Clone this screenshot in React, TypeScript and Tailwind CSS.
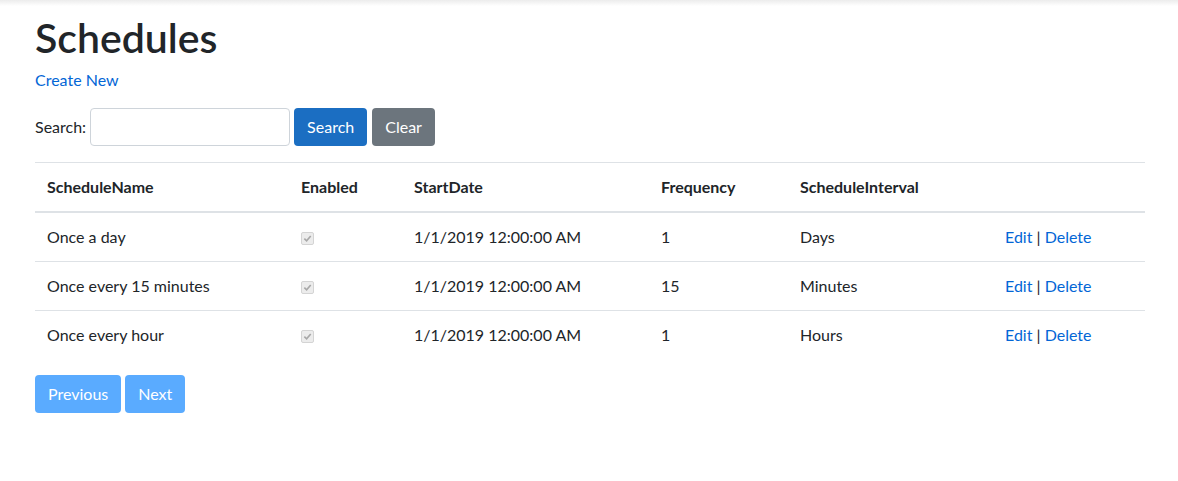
import React from 'react';

interface Schedule {
  name: string;
  enabled: boolean;
  startDate: string;
  frequency: number;
  interval: string;
}

const schedules: Schedule[] = [
  { name: 'Once a day', enabled: true, startDate: '1/1/2019 12:00:00 AM', frequency: 1, interval: 'Days' },
  { name: 'Once every 15 minutes', enabled: true, startDate: '1/1/2019 12:00:00 AM', frequency: 15, interval: 'Minutes' },
  { name: 'Once every hour', enabled: true, startDate: '1/1/2019 12:00:00 AM', frequency: 1, interval: 'Hours' },
];

function CheckBox() {
  return (
    <span className="inline-flex h-[13px] w-[13px] items-center justify-center rounded-[2px] border border-[#d4d4d4] bg-[#ececec] align-middle">
      <svg viewBox="0 0 10 10" className="h-[9px] w-[9px]">
        <path d="M1.5 5.2 L4 7.6 L8.6 2.2" fill="none" stroke="#a8a8a8" strokeWidth="1.8" />
      </svg>
    </span>
  );
}

export default function App() {
  return (
    <div className="min-h-[481px] bg-white text-[16px] leading-6 text-[#212529]" style={{ fontFamily: 'Lato, "Open Sans", sans-serif' }}>
      <div className="h-[6px] bg-gradient-to-b from-[#ececec] to-white" />
      <div className="pl-[35px] pr-[33px]">
        <h1 className="mt-[8px] text-[41px] font-semibold leading-[48px]">Schedules</h1>
        <a href="#" className="mt-[6px] block text-[#0366d6]">Create New</a>
        <form className="mt-[16px] flex items-center" onSubmit={(e) => e.preventDefault()}>
          <label className="mr-[4px]">Search:</label>
          <input className="h-[38px] w-[200px] rounded border border-[#ced4da] px-3" />
          <button className="ml-[4px] h-[38px] rounded bg-[#1b6ec2] px-[13px] text-white">Search</button>
          <button className="ml-[5px] h-[38px] rounded bg-[#6c757d] px-[13px] text-white">Clear</button>
        </form>
        <table className="mt-[16px] w-full table-fixed border-collapse text-left">
          <colgroup>
            <col className="w-[254px]" />
            <col className="w-[113px]" />
            <col className="w-[247px]" />
            <col className="w-[139px]" />
            <col className="w-[205px]" />
            <col />
          </colgroup>
          <thead>
            <tr className="border-t border-b-2 border-t-[#dee2e6] border-b-[#dee2e6]">
              <th className="px-3 py-3 font-bold">ScheduleName</th>
              <th className="px-3 py-3 font-bold">Enabled</th>
              <th className="px-3 py-3 font-bold">StartDate</th>
              <th className="px-3 py-3 font-bold">Frequency</th>
              <th className="px-3 py-3 font-bold">ScheduleInterval</th>
              <th className="px-3 py-3" />
            </tr>
          </thead>
          <tbody>
            {schedules.map((s, i) => (
              <tr key={s.name} className={i > 0 ? 'border-t border-[#dee2e6]' : ''}>
                <td className="px-3 py-3">{s.name}</td>
                <td className="px-3 py-3"><CheckBox /></td>
                <td className="px-3 py-3">{s.startDate}</td>
                <td className="px-3 py-3">{s.frequency}</td>
                <td className="px-3 py-3">{s.interval}</td>
                <td className="px-3 py-3">
                  <a href="#" className="text-[#0366d6]">Edit</a> | <a href="#" className="text-[#0366d6]">Delete</a>
                </td>
              </tr>
            ))}
          </tbody>
        </table>
        <div className="mt-[16px] flex gap-[4px]">
          <button className="h-[38px] rounded bg-[#5aabff] px-[13px] text-white">Previous</button>
          <button className="h-[38px] rounded bg-[#5aabff] px-[13px] text-white">Next</button>
        </div>
      </div>
    </div>
  );
}
